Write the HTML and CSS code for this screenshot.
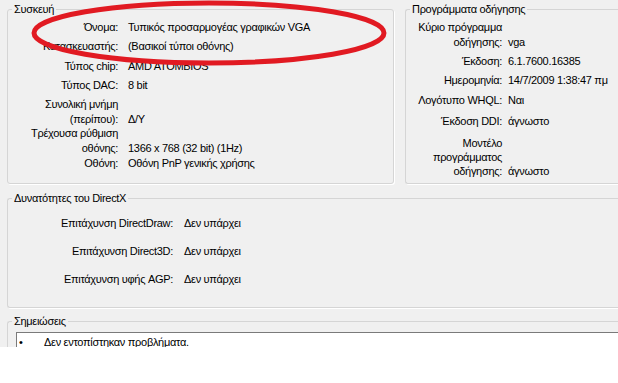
FILE: index.html
```html
<!DOCTYPE html>
<html lang="el">
<head>
<meta charset="utf-8">
<title>DirectX Diagnostic Tool - Οθόνη</title>
<link rel="stylesheet" href="styles.css">
</head>
<body>
<div class="window">
  <div class="top">
    <fieldset class="group device">
      <legend>Συσκευή</legend>
      <div class="rows">
        <div class="row"><span class="lbl">Όνομα:</span><span class="val">Τυπικός προσαρμογέας γραφικών VGA</span></div>
        <div class="row"><span class="lbl">Κατασκευαστής:</span><span class="val">(Βασικοί τύποι οθόνης)</span></div>
        <div class="row g5"><span class="lbl">Τύπος chip:</span><span class="val">AMD ATOMBIOS</span></div>
        <div class="row"><span class="lbl">Τύπος DAC:</span><span class="val">8 bit</span></div>
        <div class="row"><span class="lbl">Συνολική μνήμη<br>(περίπου):</span><span class="val">Δ/Υ</span></div>
        <div class="row gm1"><span class="lbl">Τρέχουσα ρύθμιση<br>οθόνης:</span><span class="val">1366 x 768 (32 bit) (1Hz)</span></div>
        <div class="row g0"><span class="lbl">Οθόνη:</span><span class="val">Οθόνη PnP γενικής χρήσης</span></div>
      </div>
    </fieldset>
    <fieldset class="group drivers open">
      <legend>Προγράμματα οδήγησης</legend>
      <div class="rows">
        <div class="row"><span class="lbl">Κύριο πρόγραμμα<br>οδήγησης:</span><span class="val">vga</span></div>
        <div class="row"><span class="lbl">Έκδοση:</span><span class="val">6.1.7600.16385</span></div>
        <div class="row"><span class="lbl">Ημερομηνία:</span><span class="val">14/7/2009 1:38:47 πμ</span></div>
        <div class="row g5"><span class="lbl">Λογότυπο WHQL:</span><span class="val">Ναι</span></div>
        <div class="row g6"><span class="lbl">Έκδοση DDI:</span><span class="val">άγνωστο</span></div>
        <div class="row g7 tight"><span class="lbl">Μοντέλο<br>προγράμματος<br>οδήγησης:</span><span class="val">άγνωστο</span></div>
      </div>
    </fieldset>
  </div>
  <fieldset class="group directx open">
    <legend>Δυνατότητες του DirectX</legend>
    <div class="rows">
      <div class="row"><span class="lbl">Επιτάχυνση DirectDraw:</span><span class="val">Δεν υπάρχει</span></div>
      <div class="row"><span class="lbl">Επιτάχυνση Direct3D:</span><span class="val">Δεν υπάρχει</span></div>
      <div class="row"><span class="lbl">Επιτάχυνση υφής AGP:</span><span class="val">Δεν υπάρχει</span></div>
    </div>
  </fieldset>
  <fieldset class="group notes open">
    <legend>Σημειώσεις</legend>
    <div class="notebox"><span class="bullet">•</span><span class="note">Δεν εντοπίστηκαν προβλήματα.</span></div>
  </fieldset>
</div>
<svg class="ring" width="618" height="80" viewBox="0 0 618 80" aria-hidden="true">
  <ellipse cx="209" cy="33" rx="175" ry="30" fill="none" stroke="#e11a22" stroke-width="5"/>
</svg>
</body>
</html>
```
FILE: styles.css
```css
html, body {
  margin: 0;
  padding: 0;
  background: #ffffff;
  overflow: hidden;
}

body {
  position: relative;
  width: 618px;
  height: 383px;
  font-family: "Liberation Sans", "DejaVu Sans", sans-serif;
  font-size: 11px;
  letter-spacing: -0.3px;
  color: #000;
}

.window {
  width: 618px;
  height: 347px;
  overflow: hidden;
  background: #f0f0f0;
  padding: 2px 0 0 7px;
  box-sizing: border-box;
}

.top {
  display: flex;
  gap: 11px;
}

.group {
  margin: 0;
  padding: 0;
  min-width: 0;
  border: 1px solid #d5d5d5;
  border-radius: 3px;
  box-shadow: 1px 1px 0 #ffffff;
  box-sizing: border-box;
}

.group.open {
  border-right: none;
  border-radius: 3px 0 0 3px;
}

.group legend {
  margin-left: 4px;
  padding: 0 2px;
  line-height: 14px;
  font-size: 11px;
}

.device {
  width: 387px;
  flex: none;
  height: 182px;
}

.drivers {
  flex: 1;
  height: 182px;
}

.rows {
  display: flex;
  flex-direction: column;
  padding-top: 4px;
}

.row {
  display: flex;
  align-items: flex-end;
  line-height: 15px;
  white-space: nowrap;
}

.row + .row {
  margin-top: 4px;
}

.row.g5 { margin-top: 5px; }
.row.g6 { margin-top: 6px; }
.row.g7 { margin-top: 7px; }
.row.g0 { margin-top: 0; }
.row.gm1 { margin-top: -1px; }
.row.tight { line-height: 14px; }

.lbl {
  text-align: right;
  flex: none;
}

.device .lbl {
  width: 110px;
  margin-right: 10px;
}

.drivers .lbl {
  width: 96px;
  margin-right: 6px;
}

.directx {
  margin-top: 7px;
  height: 117px;
}

.directx .rows {
  padding-top: 11px;
}

.directx .row + .row {
  margin-top: 13px;
}

.directx .lbl {
  width: 165px;
  margin-right: 11px;
}

.notes {
  margin-top: 6px;
  height: 60px;
}

.notebox {
  margin: 4px 0 0 8px;
  background: #ffffff;
  border-top: 1px solid #7a7a7a;
  border-left: 1px solid #7a7a7a;
  padding: 2px 0 0 2px;
  height: 40px;
  display: flex;
  line-height: 15px;
}

.bullet {
  width: 25px;
  flex: none;
}

.ring {
  position: absolute;
  left: 0;
  top: 0;
  pointer-events: none;
}
```
